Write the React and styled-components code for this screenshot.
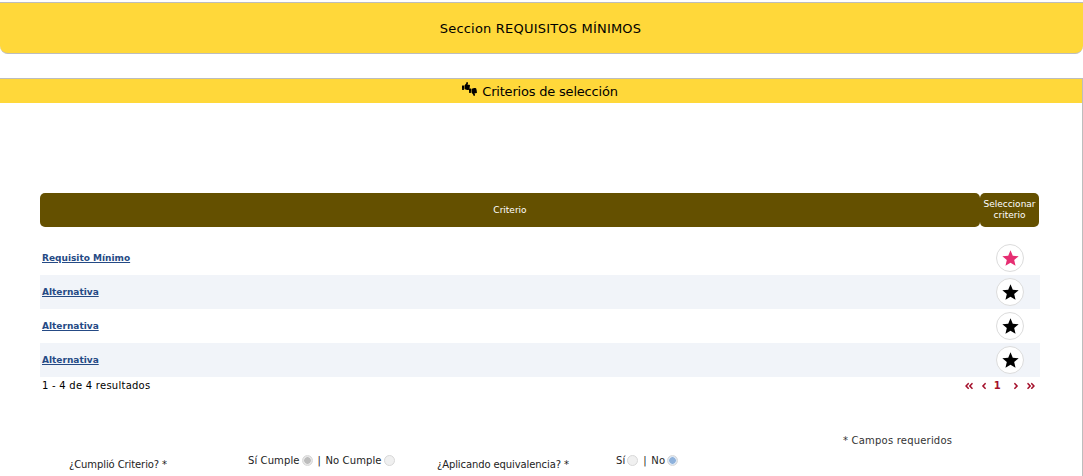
import React from "react";
import styled, { createGlobalStyle } from "styled-components";
import { FaThumbsUp, FaThumbsDown, FaAngleDoubleLeft, FaAngleDoubleRight, FaAngleLeft, FaAngleRight } from "react-icons/fa";

const GlobalStyle = createGlobalStyle`
    html, body {
        margin: 0;
        height: 476px;
        overflow: hidden;
        background: #fff;
        font-family: "DejaVu Sans", Verdana, sans-serif;
        color: #000;
    }
`;

const Page = styled.div`
    padding-top: 2px;
`;

const SectionBanner = styled.div`
    height: 50px;
    padding-right: 2px;
    background: #ffd83a;
    border-top: 1px solid #bdbdbd;
    border-bottom: 1px solid #bdbdbd;
    border-radius: 0 0 8px 8px;
    display: flex;
    align-items: center;
    justify-content: center;
    font-size: 13px;
    letter-spacing: 0.2px;
`;

const Panel = styled.section`
    margin-top: 24px;
    height: 398px;
    border-top: 1px solid #bdbdbd;
    border-right: 1px solid #bdbdbd;
`;

const PanelTitle = styled.div`
    height: 24px;
    padding-right: 2px;
    background: #ffd83a;
    display: flex;
    align-items: center;
    justify-content: center;
    gap: 5px;
    font-size: 13px;
    letter-spacing: -0.2px;
`;

const TitleIcon = styled.span`
    position: relative;
    display: inline-block;
    width: 15px;
    height: 14px;
    margin-top: -4px;
    font-size: 8px;

    svg {
        position: absolute;
    }
    svg:first-child {
        left: 0;
        top: 0;
    }
    svg:last-child {
        right: 0;
        bottom: 0;
    }
`;

const TableWrap = styled.div`
    margin: 90px 42px 0 40px;
`;

const HeaderRow = styled.div`
    display: grid;
    grid-template-columns: 940px 59px;
    height: 34px;
`;

const HeaderCell = styled.div`
    background: #645000;
    color: #fff;
    border-radius: 5px;
    font-size: 9px;
    line-height: 11px;
    display: flex;
    align-items: center;
    justify-content: center;
    text-align: center;
`;

const Rows = styled.div`
    margin-top: 14px;
`;

const Row = styled.div`
    height: 34px;
    display: flex;
    align-items: center;
    justify-content: space-between;
    padding: 0 16px 0 2px;
    background: ${({ $striped }) => ($striped ? "#f1f4f9" : "#fff")};
`;

const RowLink = styled.a`
    font-size: 9px;
    font-weight: bold;
    color: #254a85;
    text-decoration: underline;
`;

const StarButton = styled.span`
    width: 26px;
    height: 26px;
    border: 1px solid #dcdcdc;
    border-radius: 50%;
    background: #fff;
    display: flex;
    align-items: center;
    justify-content: center;
    color: ${({ $active }) => ($active ? "#e62e72" : "#000")};
`;

const Pager = styled.div`
    display: flex;
    align-items: center;
    justify-content: space-between;
    height: 17px;
    font-size: 10px;
    letter-spacing: 0.25px;
    padding: 0 4px 0 2px;
`;

const PagerLinks = styled.div`
    display: flex;
    align-items: center;
    color: #a5112c;
    font-weight: bold;
    font-size: 10px;
`;

const PagerItem = styled.span`
    display: flex;
    margin-left: ${({ $gap }) => $gap}px;
`;

const Required = styled.div`
    margin: 40px 0 0 803px;
    font-size: 10px;
    height: 13px;
    line-height: 13px;
    letter-spacing: 0.2px;
    color: #333;
`;

const FormRow = styled.div`
    display: grid;
    grid-template-columns: 179px 189px 179px auto;
    margin: 6px 0 0 29px;
    font-size: 10px;
    color: #222;
`;

const FieldLabel = styled.label`
    padding-top: 6px;
    letter-spacing: -0.1px;
`;

const Options = styled.div`
    display: flex;
    align-items: center;
    height: 14px;
    letter-spacing: 0.1px;
`;

const Separator = styled.span`
    margin-right: 4.5px;
`;

const Radio = styled.span`
    width: 9px;
    height: 9px;
    margin: 0 5px 0 2px;
    border-radius: 50%;
    border: 1px solid #d8d8d8;
    background: ${({ $on }) =>
        $on === "blue"
            ? "radial-gradient(circle, #8fb2dc 0 3px, #dbe6f3 3.5px)"
            : $on === "grey"
              ? "radial-gradient(circle, #bdbdbd 0 3px, #e6e6e6 3.5px)"
              : "#f0f0f0"};
`;

const Star = ({ active }) => (
    <StarButton $active={active}>
        <svg width="17" height="17" viewBox="0 0 24 24" fill="currentColor">
            <path d="M12 .5l3.2 7.6 8.3.7-6.3 5.4 1.9 8.1L12 18l-7.1 4.3 1.9-8.1L.5 8.8l8.3-.7z" />
        </svg>
    </StarButton>
);

export default function App() {
    const rows = ["Requisito Mínimo", "Alternativa", "Alternativa", "Alternativa"];
    return (
        <Page>
            <GlobalStyle />
            <SectionBanner>Seccion REQUISITOS MÍNIMOS</SectionBanner>
            <Panel>
                <PanelTitle>
                    <TitleIcon>
                        <FaThumbsUp />
                        <FaThumbsDown />
                    </TitleIcon>
                    Criterios de selección
                </PanelTitle>
                <TableWrap>
                    <HeaderRow>
                        <HeaderCell>Criterio</HeaderCell>
                        <HeaderCell>Seleccionar criterio</HeaderCell>
                    </HeaderRow>
                    <Rows>
                        {rows.map((r, i) => (
                            <Row key={i} $striped={i % 2 === 1}>
                                <RowLink href="#">{r}</RowLink>
                                <Star active={i === 0} />
                            </Row>
                        ))}
                    </Rows>
                    <Pager>
                        <span>1 - 4 de 4 resultados</span>
                        <PagerLinks>
                            <PagerItem $gap={0}><FaAngleDoubleLeft /></PagerItem>
                            <PagerItem $gap={5}><FaAngleLeft /></PagerItem>
                            <PagerItem $gap={5}>1</PagerItem>
                            <PagerItem $gap={10}><FaAngleRight /></PagerItem>
                            <PagerItem $gap={5}><FaAngleDoubleRight /></PagerItem>
                        </PagerLinks>
                    </Pager>
                    <Required>* Campos requeridos</Required>
                    <FormRow>
                        <FieldLabel>¿Cumplió Criterio? *</FieldLabel>
                        <Options>
                            Sí Cumple<Radio $on="grey" /><Separator>|</Separator>No Cumple<Radio />
                        </Options>
                        <FieldLabel>¿Aplicando equivalencia? *</FieldLabel>
                        <Options>
                            Sí<Radio /><Separator>|</Separator>No<Radio $on="blue" />
                        </Options>
                    </FormRow>
                </TableWrap>
            </Panel>
        </Page>
    );
}
